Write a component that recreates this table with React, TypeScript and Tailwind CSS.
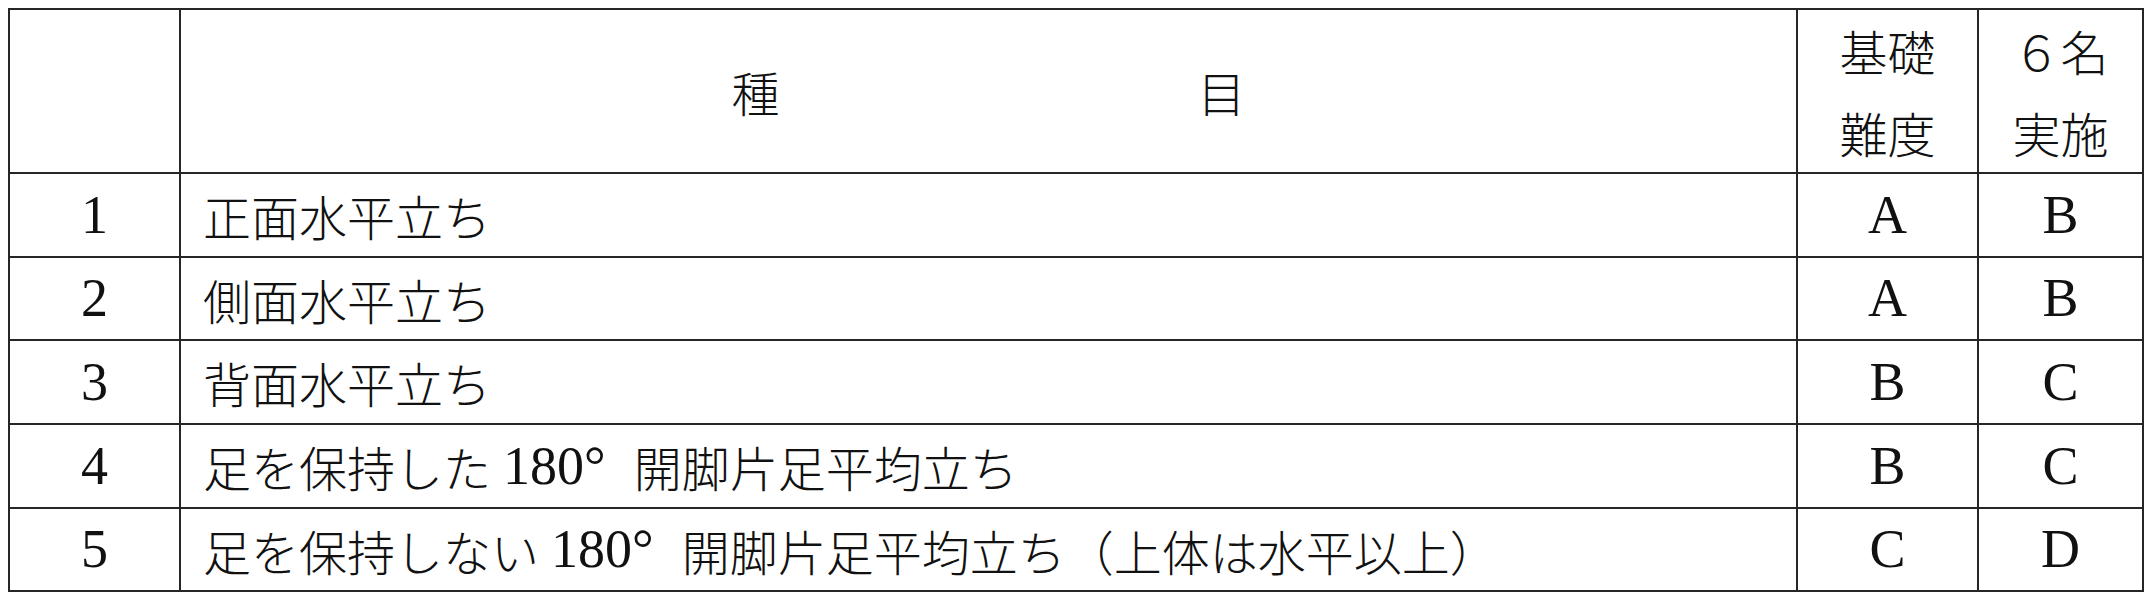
const rows = [
  { no: "1", parts: ["正面水平立ち"], basic: "A", six: "B" },
  { no: "2", parts: ["側面水平立ち"], basic: "A", six: "B" },
  { no: "3", parts: ["背面水平立ち"], basic: "B", six: "C" },
  { no: "4", parts: ["足を保持した", "180°", "開脚片足平均立ち"], basic: "B", six: "C" },
  { no: "5", parts: ["足を保持しない", "180°", "開脚片足平均立ち（上体は水平以上）"], basic: "C", six: "D" },
];

const rowHeights = ["h-[82px]", "h-[81px]", "h-[82px]", "h-[82px]", "h-[81px]"];

const jp = "font-['Noto_Sans_CJK_JP',sans-serif] text-[48px] font-light";
const latin = "font-['Liberation_Serif',serif] text-[54px]";

export default function App() {
  return (
    <div className="min-h-screen bg-white pl-[8px] pt-[8px] text-[#111]">
      <div className="grid w-fit grid-cols-[169px_1615px_179px_163px] gap-[2px] bg-[#262626] p-[2px]">
        {/* header */}
        <div className="h-[162px] bg-white" />
        <div className={`flex h-[162px] items-center justify-center gap-[418px] bg-white ${jp}`}>
          <span>種</span>
          <span>目</span>
        </div>
        <div className={`flex h-[162px] flex-col items-center justify-center bg-white leading-[82px] ${jp}`}>
          <span>基礎</span>
          <span>難度</span>
        </div>
        <div className={`flex h-[162px] flex-col items-center justify-center bg-white leading-[82px] ${jp}`}>
          <span>６名</span>
          <span>実施</span>
        </div>

        {rows.map((r, i) => (
          <div key={r.no} className="contents">
            <div className={`flex items-center justify-center bg-white ${rowHeights[i]} ${latin}`}>{r.no}</div>
            <div className={`flex items-center bg-white pl-[22px] ${rowHeights[i]}`}>
              <span className={jp}>{r.parts[0]}</span>
              {r.parts[1] && <span className={`ml-[12px] mr-[28px] ${latin}`}>{r.parts[1]}</span>}
              {r.parts[2] && <span className={jp}>{r.parts[2]}</span>}
            </div>
            <div className={`flex items-center justify-center bg-white ${rowHeights[i]} ${latin}`}>{r.basic}</div>
            <div className={`flex items-center justify-center bg-white ${rowHeights[i]} ${latin}`}>{r.six}</div>
          </div>
        ))}
      </div>
    </div>
  );
}
